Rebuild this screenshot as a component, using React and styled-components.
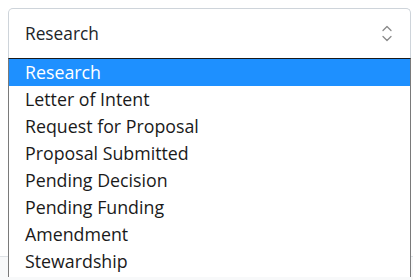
import React from 'react';
import styled, { createGlobalStyle } from 'styled-components';

const Global = createGlobalStyle`
  html, body {
    margin: 0;
    background: #fff;
    font-family: 'Open Sans', 'Noto Sans', sans-serif;
    color: #212529;
  }
`;

const Page = styled.div`
  position: relative;
  padding: 8px 2px 0 8px;
  height: 280px;
  box-sizing: border-box;
  overflow: hidden;
  display: flex;
  flex-direction: column;
`;

const Select = styled.div`
  height: 50px;
  box-sizing: border-box;
  border: 1px solid #ced4da;
  border-bottom: none;
  border-radius: 5px 5px 0 0;
  display: flex;
  align-items: center;
  justify-content: space-between;
  padding: 0 18px 0 16px;
  font-size: 17.3px;
`;

const Body = styled.div`
  flex: 1;
  display: flex;
  flex-direction: column;
  margin-left: -8px;
  margin-right: -2px;
`;

const Spacer = styled.div`
  height: 198px;
`;

const Footer = styled.div`
  flex: 1;
  border-top: 1px solid #dee2e6;
  background: #f8f9fa;
`;

const List = styled.ul`
  position: absolute;
  top: 58px;
  left: 8px;
  width: 403px;
  height: 219px;
  box-sizing: border-box;
  margin: 0;
  padding: 0;
  list-style: none;
  background: #fff;
  border: 1px solid #7a7a7a;
  border-top: 1px solid #1a1a1a;
  border-bottom: none;
`;

const Option = styled.li`
  height: 27px;
  line-height: 27px;
  padding-left: 16px;
  font-size: 17.8px;
  background: ${(p) => (p.$active ? '#1e90ff' : 'transparent')};
  color: ${(p) => (p.$active ? '#fff' : '#1a1a1a')};
`;

const options = [
  'Research',
  'Letter of Intent',
  'Request for Proposal',
  'Proposal Submitted',
  'Pending Decision',
  'Pending Funding',
  'Amendment',
  'Stewardship',
];

const Chevrons = () => (
  <svg width="10" height="17" viewBox="0 0 10 17" fill="none" stroke="#8a8a8a" strokeWidth="1.3" strokeLinecap="round" strokeLinejoin="round">
    <path d="M1 5.5 L5 1.5 L9 5.5" />
    <path d="M1 11.5 L5 15.5 L9 11.5" />
  </svg>
);

export default function App() {
  return (
    <>
      <Global />
      <Page>
        <Select>
          <span>Research</span>
          <Chevrons />
        </Select>
        <Body>
          <Spacer />
          <Footer />
        </Body>
        <List>
          {options.map((o, i) => (
            <Option key={o} $active={i === 0}>
              {o}
            </Option>
          ))}
        </List>
      </Page>
    </>
  );
}
